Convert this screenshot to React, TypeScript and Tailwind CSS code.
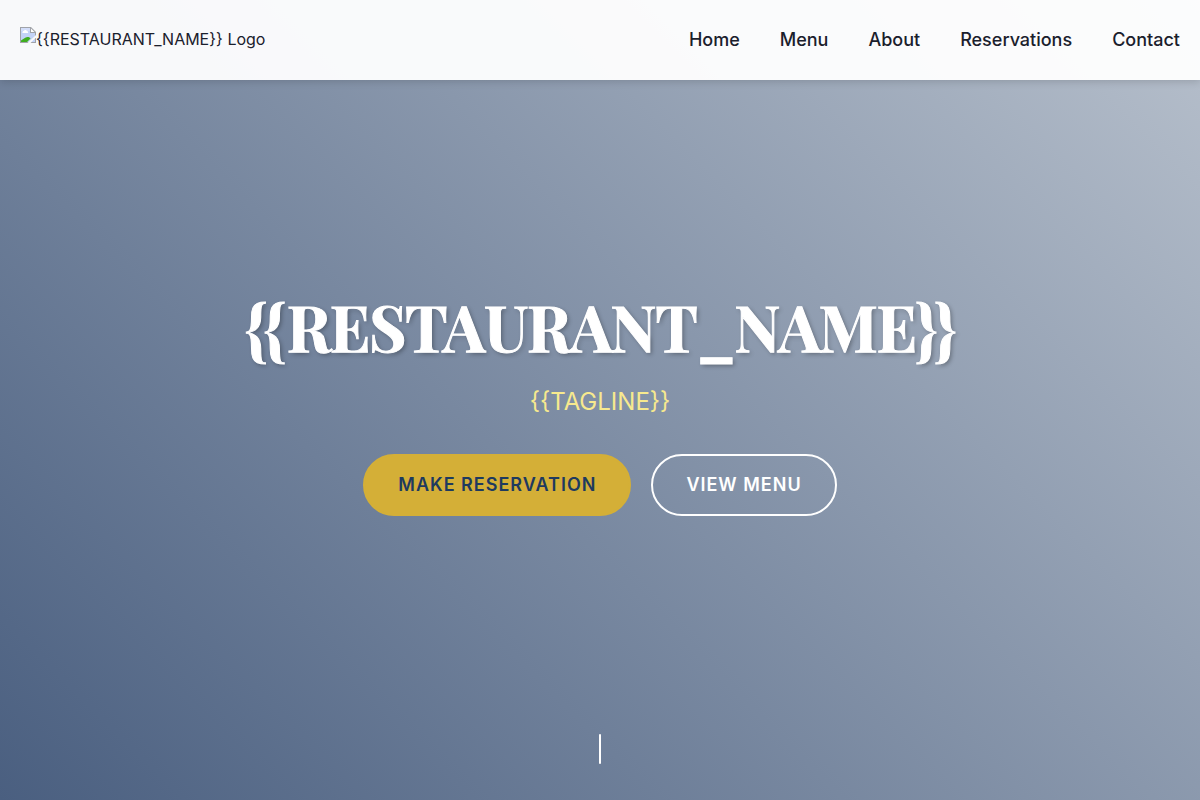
const links = ["Home", "Menu", "About", "Reservations", "Contact"];

function BrokenImageIcon() {
  return (
    <svg width="16" height="16" viewBox="0 0 16 16" aria-hidden="true" className="block shrink-0">
      <path d="M0 0H11L16 5V16H0Z" fill="#a0a3a8" />
      <path d="M1 1H10V6H15V15H1Z" fill="#c3d3f7" />
      <path d="M1 1H10V4H1Z" fill="#d3defa" />
      <path d="M11 1.500L14.500 5H11Z" fill="#fff" />
      <path d="M2.500 6C2 4.500 3 4 4 4C4.300 2.600 6.500 2.600 6.800 4C8 4 8.500 5 8 6Z" fill="#fff" />
      <path d="M1 15V13.500C3 12.500 5 10 7.500 10C9 10 10 10.500 10.500 11.500L7 15Z" fill="#3fae1f" />
      <path d="M16 8V10.500L10.500 16H7.500Z" fill="#fafafb" />
      <path d="M12 15L15 12V15Z" fill="#c3d3f7" />
    </svg>
  );
}

export default function App() {
  return (
    <div className="flex min-h-screen flex-col bg-[linear-gradient(45deg,#4a5f80,#b7c0cc)] font-['Inter',sans-serif] text-[#1a202c]">
      <header className="relative flex h-20 items-center justify-between bg-white/95 px-5 shadow-[0_2px_8px_rgba(0,0,0,0.15)]">
        <a href="#home" className="flex items-start pb-0.5 text-base leading-6">
          <BrokenImageIcon />
          <span>{"{{RESTAURANT_NAME}} Logo"}</span>
        </a>
        <nav aria-label="Main">
          <ul className="flex gap-10 text-[18px] leading-6 font-medium">
            {links.map((link) => (
              <li key={link}>
                <a href={"#" + link.toLowerCase()}>{link}</a>
              </li>
            ))}
          </ul>
        </nav>
      </header>
      <main className="relative flex flex-1 flex-col items-center justify-center px-5 pb-[76px] text-center">
        <h1 className="mb-[18px] font-['Playfair_Display','Liberation_Serif',serif] text-[64px] leading-[76px] font-bold tracking-[-0.02em] text-white [-webkit-text-stroke:1px_white] [text-shadow:2px_2px_4px_rgba(0,0,0,0.3)]">
          {"{{RESTAURANT_NAME}}"}
        </h1>
        <p className="mb-8 text-2xl leading-10 font-normal text-[#f7e98e]">{"{{TAGLINE}}"}</p>
        <div className="flex flex-wrap justify-center gap-5">
          <a href="#reservations" className="rounded-full border-2 border-[#d4af37] bg-[#d4af37] px-[33px] py-4 text-[18px] leading-[26px] font-semibold tracking-[1px] text-[#1e3a5f] uppercase">
            Make Reservation
          </a>
          <a href="#menu" className="rounded-full border-2 border-white px-[33px] py-4 text-[18px] leading-[26px] font-semibold tracking-[1px] text-white uppercase">
            View Menu
          </a>
        </div>
        <div className="absolute bottom-9 left-1/2 h-[30px] w-0.5 -translate-x-1/2 rounded-full bg-white" />
      </main>
    </div>
  );
}
